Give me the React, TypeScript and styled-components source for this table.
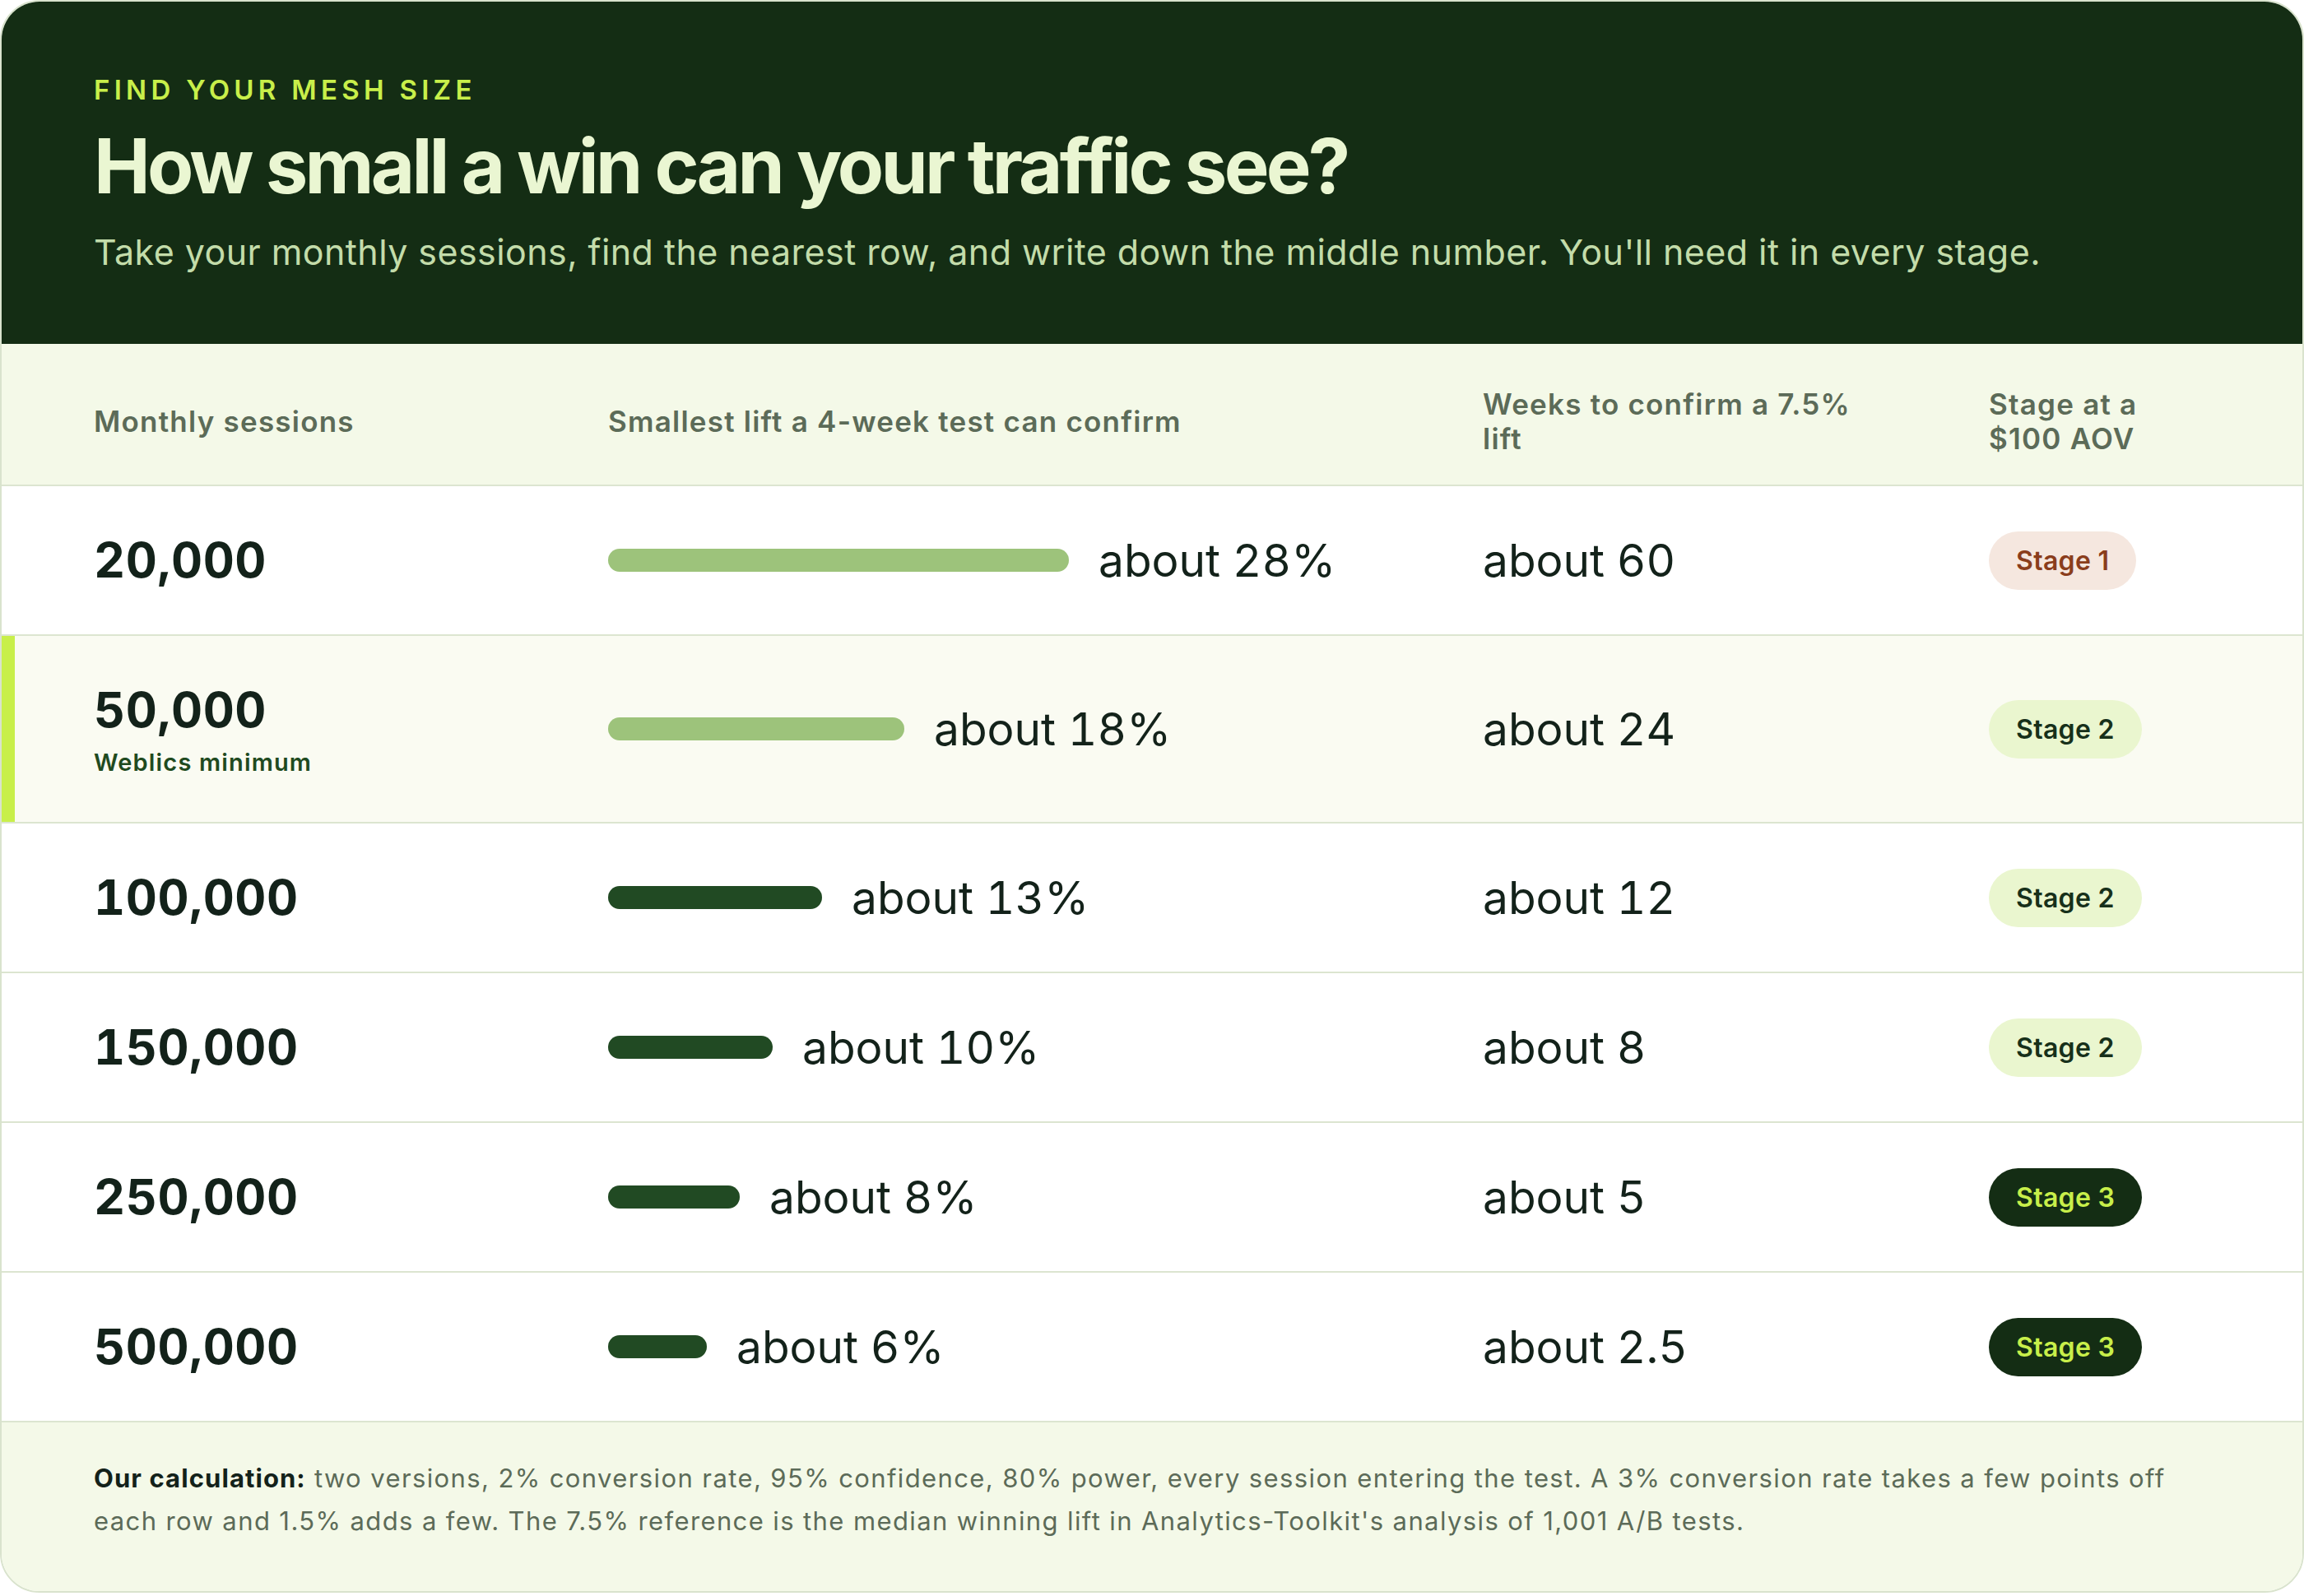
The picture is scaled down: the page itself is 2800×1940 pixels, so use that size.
import React from 'react';
import styled, { createGlobalStyle } from 'styled-components';

const GlobalStyle = createGlobalStyle`
  html, body { margin: 0; padding: 0; background: #ffffff; }
  body { font-family: Inter, "Noto Sans", sans-serif; }
  * { box-sizing: border-box; }
`;

const Card = styled.section`
  width: 2800px;
  border: 2px solid #d9e3cd;
  border-radius: 48px;
  overflow: hidden;
  background: #ffffff;
  font-family: Inter, "Noto Sans", sans-serif;
`;

const Header = styled.header`
  background: #142d14;
  padding: 87px 112px 82px;
`;

const Eyebrow = styled.div`
  font-size: 33px;
  line-height: 40px;
  font-weight: 600;
  letter-spacing: 0.16em;
  color: #c8ef4a;
  text-transform: uppercase;
  margin-bottom: 22px;
`;

const Title = styled.h1`
  margin: 0 0 24px;
  font-size: 92px;
  line-height: 1.1;
  font-weight: 700;
  letter-spacing: -0.041em;
  color: #eaf6d2;
`;

const Lede = styled.p`
  margin: 0;
  font-size: 43px;
  line-height: 60px;
  letter-spacing: 0.01em;
  color: #c3dcaa;
`;

const gridCols = `
  display: grid;
  grid-template-columns: 577px 1015px 567px 1fr;
  column-gap: 48px;
  align-items: center;
`;

const HeadRow = styled.div`
  ${gridCols}
  background: #f4f9e8;
  padding: 52px 112px 35px;
  border-bottom: 2px solid #dce5d0;
`;

const HeadCell = styled.div<{ $max?: number }>`
  font-size: 35px;
  line-height: 42px;
  font-weight: 600;
  letter-spacing: 0.035em;
  color: #5c6b58;
  max-width: ${(p) => (p.$max ? `${p.$max}px` : 'none')};
`;

const Row = styled.div<{ $highlight?: boolean }>`
  ${gridCols}
  padding: 54px 112px;
  border-bottom: 2px solid #dce5d0;
  background: ${(p) => (p.$highlight ? '#fafbf2' : '#ffffff')};
  box-shadow: ${(p) => (p.$highlight ? 'inset 16px 0 0 #c8ef4a' : 'none')};
`;

const SessionCell = styled.div`
  display: flex;
  flex-direction: column;
`;

const Sessions = styled.div`
  font-size: 59px;
  line-height: 72px;
  font-weight: 700;
  letter-spacing: 0.01em;
  font-variant-numeric: tabular-nums;
  color: #13221a;
`;

const Note = styled.div`
  margin-top: 10px;
  font-size: 29px;
  line-height: 36px;
  font-weight: 600;
  letter-spacing: 0.04em;
  color: #1f4a20;
`;

const LiftCell = styled.div`
  display: flex;
  align-items: center;
  gap: 36px;
`;

const Bar = styled.div<{ $tone: 'light' | 'dark' }>`
  height: 28px;
  border-radius: 14px;
  flex: none;
  background: ${(p) => (p.$tone === 'light' ? '#9dc37b' : '#214a23')};
`;

const Value = styled.div`
  font-size: 55px;
  line-height: 72px;
  font-weight: 400;
  font-variant-numeric: tabular-nums;
  color: #13221a;
`;

type Stage = 1 | 2 | 3;

const stageColors: Record<Stage, { bg: string; fg: string }> = {
  1: { bg: '#f5e7df', fg: '#8a3d1c' },
  2: { bg: '#eaf6cf', fg: '#17301a' },
  3: { bg: '#142d14', fg: '#c8ef4a' },
};

const Badge = styled.span<{ $stage: Stage }>`
  justify-self: start;
  display: inline-flex;
  align-items: center;
  height: 71px;
  padding: 0 33px;
  border-radius: 999px;
  font-size: 32px;
  font-weight: 600;
  letter-spacing: 0.01em;
  background: ${(p) => stageColors[p.$stage].bg};
  color: ${(p) => stageColors[p.$stage].fg};
`;

const Footer = styled.footer`
  background: #f4f9e8;
  padding: 42px 112px 59px;
  font-size: 31px;
  line-height: 52px;
  letter-spacing: 0.045em;
  color: #5c6b58;
`;

const Strong = styled.strong`
  color: #13221a;
  font-weight: 700;
  letter-spacing: 0.035em;
`;

const rows: {
  sessions: string;
  note?: string;
  lift: number;
  weeks: string;
  stage: Stage;
}[] = [
  { sessions: '20,000', lift: 28, weeks: 'about 60', stage: 1 },
  { sessions: '50,000', note: 'Weblics minimum', lift: 18, weeks: 'about 24', stage: 2 },
  { sessions: '100,000', lift: 13, weeks: 'about 12', stage: 2 },
  { sessions: '150,000', lift: 10, weeks: 'about 8', stage: 2 },
  { sessions: '250,000', lift: 8, weeks: 'about 5', stage: 3 },
  { sessions: '500,000', lift: 6, weeks: 'about 2.5', stage: 3 },
];

export default function App() {
  return (
    <>
      <GlobalStyle />
      <Card>
        <Header>
          <Eyebrow>Find your mesh size</Eyebrow>
          <Title>How small a win can your traffic see?</Title>
          <Lede>
            Take your monthly sessions, find the nearest row, and write down the middle number. You'll need it in every stage.
          </Lede>
        </Header>
        <HeadRow>
          <HeadCell>Monthly sessions</HeadCell>
          <HeadCell>Smallest lift a 4-week test can confirm</HeadCell>
          <HeadCell $max={480}>Weeks to confirm a 7.5% lift</HeadCell>
          <HeadCell $max={200}>Stage at a $100 AOV</HeadCell>
        </HeadRow>
        {rows.map((r) => (
          <Row key={r.sessions} $highlight={!!r.note}>
            <SessionCell>
              <Sessions>{r.sessions}</Sessions>
              {r.note && <Note>{r.note}</Note>}
            </SessionCell>
            <LiftCell>
              <Bar $tone={r.lift >= 15 ? 'light' : 'dark'} style={{ width: `${r.lift * 20}px` }} />
              <Value>about {r.lift}%</Value>
            </LiftCell>
            <Value>{r.weeks}</Value>
            <Badge $stage={r.stage}>Stage {r.stage}</Badge>
          </Row>
        ))}
        <Footer>
          <Strong>Our calculation:</Strong> two versions, 2% conversion rate, 95% confidence, 80% power, every session entering the test. A 3% conversion rate takes a few points off each row and 1.5% adds a few. The 7.5% reference is the median winning lift in Analytics-Toolkit's analysis of 1,001 A/B tests.
        </Footer>
      </Card>
    </>
  );
}
